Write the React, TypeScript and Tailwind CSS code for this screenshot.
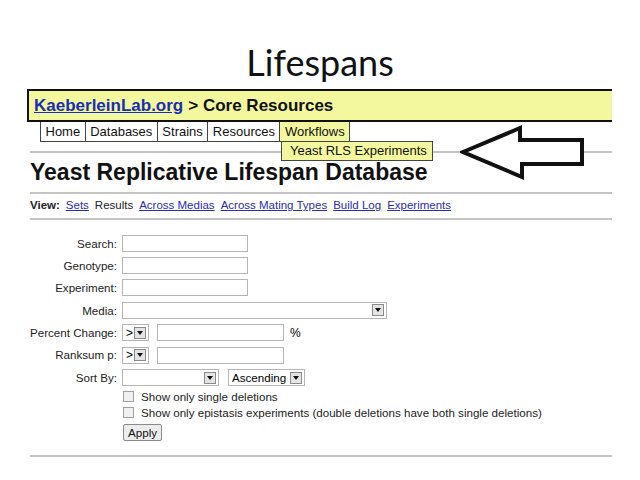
import React from 'react';

const arial = { fontFamily: '"Liberation Sans", Arial, sans-serif' };

function SelectArrow() {
  return (
    <span className="flex items-center justify-center w-[12px] h-[12px] border border-[#8a8a8a] bg-[#e4e4e4]">
      <svg width="6" height="4" viewBox="0 0 6 4">
        <path d="M0 0 L6 0 L3 4 Z" fill="#111" />
      </svg>
    </span>
  );
}

function TextBox({ width }: { width: string }) {
  return <span className={`block h-[17px] border border-[#b5b5b5] bg-white ${width}`} />;
}

function FormRow({ label, children }: { label: string; children: React.ReactNode }) {
  return (
    <div className="flex items-center h-[22.4px]">
      <span className="w-[88px] text-right whitespace-nowrap pr-[1px] text-[11.6px] text-[#222]">{label}</span>
      <div className="ml-[4px] flex items-center">{children}</div>
    </div>
  );
}

const tabs = ['Home', 'Databases', 'Strains', 'Resources', 'Workflows'];

export default function App() {
  return (
    <div className="relative w-[640px] h-[480px] bg-white overflow-hidden" style={arial}>
      <h1
        className="pt-[40px] h-[89px] text-center text-[36px] leading-[44px] text-[#111]"
        style={{ fontFamily: 'Lato, "Open Sans", sans-serif' }}
      >
        Lifespans
      </h1>

      <div className="ml-[27px] w-[585px] h-[33px] bg-[#f3f89e] border-t-2 border-b-2 border-l-2 border-[#111] flex items-center pl-[5px] text-[17px] font-bold">
        <span className="text-[#1a2db5] underline">KaeberleinLab.org</span>
        <span className="ml-[5px] text-[#111]">&gt; Core Resources</span>
      </div>

      <div className="ml-[40px] flex h-[20px] text-[13px] text-[#111]">
        {tabs.map((t, i) => (
          <div
            key={t}
            className={`h-full flex items-center px-[4.5px] border-r border-b border-[#444] ${
              i === 0 ? 'border-l' : ''
            } ${t === 'Workflows' ? 'bg-[#f3f89e]' : 'bg-white'}`}
          >
            {t}
          </div>
        ))}
      </div>

      <div className="ml-[30px] w-[582px]">
        <div className="mt-[9px] h-[2px] bg-[#c4c4c4]" />
        <h2 className="mt-[6px] h-[26px] text-[23px] leading-[26px] font-bold text-[#111]">
          Yeast Replicative Lifespan Database
        </h2>
        <div className="mt-[7px] h-[2px] bg-[#c4c4c4]" />
        <div className="h-[24px] flex items-center gap-[6px] text-[11.5px] text-[#222]">
          <span className="font-bold">View:</span>
          <span className="text-[#2b2bb0] underline">Sets</span>
          <span>Results</span>
          <span className="text-[#2b2bb0] underline">Across Medias</span>
          <span className="text-[#2b2bb0] underline">Across Mating Types</span>
          <span className="text-[#2b2bb0] underline">Build Log</span>
          <span className="text-[#2b2bb0] underline">Experiments</span>
        </div>
        <div className="h-[2px] bg-[#c4c4c4]" />

        <div className="mt-[12px]">
          <FormRow label="Search:">
            <TextBox width="w-[126px]" />
          </FormRow>
          <FormRow label="Genotype:">
            <TextBox width="w-[126px]" />
          </FormRow>
          <FormRow label="Experiment:">
            <TextBox width="w-[126px]" />
          </FormRow>
          <FormRow label="Media:">
            <span className="flex items-center justify-end w-[265px] h-[17px] border border-[#b5b5b5] bg-white pr-[2px]">
              <SelectArrow />
            </span>
          </FormRow>
          <FormRow label="Percent Change:">
            <span className="flex items-center justify-between w-[27px] h-[17px] border border-[#b5b5b5] bg-white pl-[3px] pr-[2px] text-[12px]">
              &gt;
              <SelectArrow />
            </span>
            <span className="ml-[8px]">
              <TextBox width="w-[127px]" />
            </span>
            <span className="ml-[6px] text-[12px]">%</span>
          </FormRow>
          <FormRow label="Ranksum p:">
            <span className="flex items-center justify-between w-[27px] h-[17px] border border-[#b5b5b5] bg-white pl-[3px] pr-[2px] text-[12px]">
              &gt;
              <SelectArrow />
            </span>
            <span className="ml-[8px]">
              <TextBox width="w-[127px]" />
            </span>
          </FormRow>
          <FormRow label="Sort By:">
            <span className="flex items-center justify-end w-[97px] h-[17px] border border-[#b5b5b5] bg-white pr-[2px]">
              <SelectArrow />
            </span>
            <span className="ml-[9px] flex items-center justify-between w-[77px] h-[17px] border border-[#b5b5b5] bg-white pl-[3px] pr-[2px] text-[11.6px]">
              Ascending
              <SelectArrow />
            </span>
          </FormRow>
          <div className="ml-[93px]">
            <div className="flex items-center h-[16px] text-[11.6px] text-[#222]">
              <span className="w-[11px] h-[11px] border border-[#a0a0a0] bg-[#f0f0f0]" />
              <span className="ml-[7px]">Show only single deletions</span>
            </div>
            <div className="flex items-center h-[16px] text-[11.6px] text-[#222]">
              <span className="w-[11px] h-[11px] border border-[#a0a0a0] bg-[#f0f0f0]" />
              <span className="ml-[7px]">
                Show only epistasis experiments (double deletions have both single deletions)
              </span>
            </div>
            <button className="block mt-[3px] h-[17px] px-[4px] border border-[#8a8a8a] rounded-[2px] bg-[#ececec] text-[11.6px] leading-[15px] text-[#111]">
              Apply
            </button>
          </div>
        </div>
        <div className="mt-[14px] h-[2px] bg-[#c4c4c4]" />
      </div>

      <div className="absolute left-[281px] top-[141px] w-[152px] h-[20px] bg-[#f3f89e] border border-[#444] flex items-center pl-[8px] text-[13px] text-[#111]">
        Yeast RLS Experiments
      </div>

      <svg className="absolute left-[460px] top-[124px]" width="126" height="57" viewBox="0 0 126 57">
        <polygon
          points="3,28 60,4 60,16 122,16 122,40 62,40 62,53"
          fill="white"
          stroke="#111"
          strokeWidth="4"
          strokeLinejoin="miter"
        />
      </svg>
    </div>
  );
}
